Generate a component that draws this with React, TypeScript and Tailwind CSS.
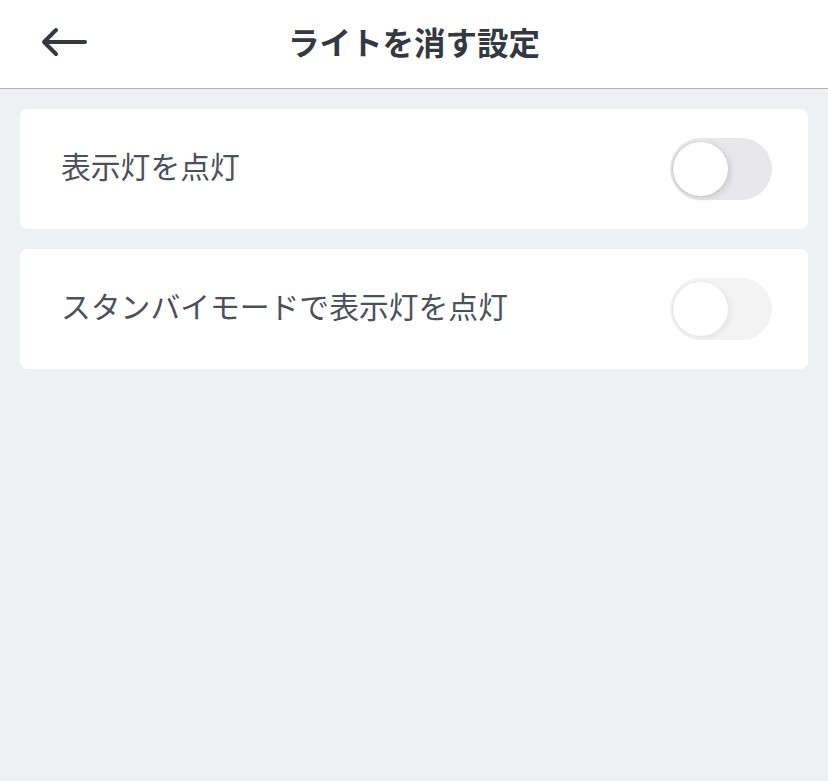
import { useState } from "react";

const font = { fontFamily: '"Noto Sans CJK JP", "Noto Sans", sans-serif' };

function Toggle({ dim }: { dim?: boolean }) {
  const [on, setOn] = useState(false);
  return (
    <button
      onClick={() => setOn(!on)}
      className={`relative h-[62px] w-[102px] shrink-0 rounded-full ${dim ? "bg-[#f3f3f4]" : "bg-[#e8e8ea]"}`}
    >
      <span
        className={`absolute top-[4px] left-[3px] h-[54px] w-[55px] rounded-full bg-white ${
          dim
            ? "shadow-[-1px_0_2px_rgba(0,0,0,0.08),3px_2px_6px_rgba(0,0,0,0.06)]"
            : "shadow-[-1px_0_2px_rgba(0,0,0,0.15),3px_2px_6px_rgba(0,0,0,0.12)]"
        }`}
      />
    </button>
  );
}

function Row({ label, dim }: { label: string; dim?: boolean }) {
  return (
    <div className="flex h-[120px] items-center justify-between rounded-lg bg-white pr-9 pl-[41px]">
      <span className="pb-[7px] text-[29.8px] text-[#4b505b]">{label}</span>
      <Toggle dim={dim} />
    </div>
  );
}

export default function App() {
  return (
    <div className="min-h-[781px] w-full bg-[#eff0f2]" style={font}>
      <header className="relative flex h-[89px] items-center justify-center border-b border-[#b4b4b4] bg-white">
        <button className="absolute top-[27px] left-[40px]">
          <svg width="47" height="30" viewBox="0 0 47 30" fill="none">
            <path
              d="M45 15H4M16 3 4 15l12 12"
              stroke="#333842"
              strokeWidth="4"
              strokeLinecap="round"
              strokeLinejoin="round"
            />
          </svg>
        </button>
        <h1 className="pb-[4px] text-[31.5px] font-bold text-[#333842]">ライトを消す設定</h1>
      </header>
      <div className="flex flex-col gap-5 px-5 pt-5">
        <Row label="表示灯を点灯" />
        <Row label="スタンバイモードで表示灯を点灯" dim />
      </div>
    </div>
  );
}
